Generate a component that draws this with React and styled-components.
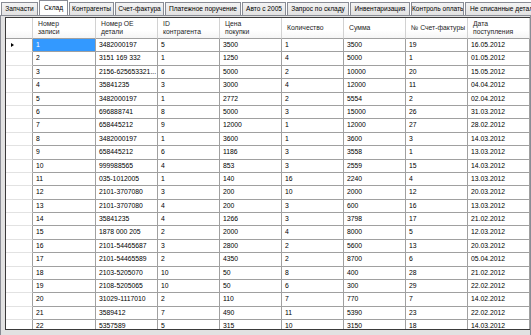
import React from "react";
import styled, { createGlobalStyle } from "styled-components";

const GlobalStyle = createGlobalStyle`
  html, body {
    margin: 0;
    padding: 0;
    background: #ffffff;
    overflow: hidden;
  }
  body {
    font-family: "Liberation Sans", Arial, sans-serif;
  }
`;

const Window = styled.div`
  width: 531px;
  height: 335px;
  display: flex;
  flex-direction: column;
  background: #ffffff;
`;

const TabStrip = styled.div`
  display: flex;
  align-items: flex-end;
  gap: 1px;
  height: 15px;
  padding-left: 1px;
  position: relative;
  z-index: 1;
  overflow: hidden;
`;

const Tab = styled.div`
  flex: none;
  box-sizing: border-box;
  width: ${(p) => p.$w}px;
  height: ${(p) => (p.$active ? 16 : 13)}px;
  margin-bottom: ${(p) => (p.$active ? -1 : 0)}px;
  border: 1px solid #898c95;
  border-bottom: none;
  background: ${(p) =>
    p.$active ? "#ffffff" : "linear-gradient(#f4f4f4, #e2e2e2)"};
  font-size: 6.6px;
  line-height: ${(p) => (p.$active ? 13 : 11)}px;
  text-align: ${(p) => (p.$left ? "left" : "center")};
  padding-left: ${(p) => (p.$left ? 4 : 0)}px;
  white-space: nowrap;
  overflow: hidden;
  color: #000000;
`;

const Page = styled.div`
  flex: 1;
  box-sizing: border-box;
  border: 1px solid #898c95;
  border-bottom: none;
  padding: 1px 0 0 4px;
  background: #e2e2e2;
`;

const Grid = styled.div`
  box-sizing: border-box;
  height: 313px;
  width: 525px;
  overflow: hidden;
  border-left: 1px solid #3a3a3a;
  border-top: 1px solid #3a3a3a;
  border-bottom: 1px solid #3a3a3a;
  background: #ffffff;
  display: grid;
  grid-template-columns: 27px 63px repeat(7, 62px);
  grid-template-rows: 21px;
  grid-auto-rows: 13.4px;
  align-content: start;
  font-size: 6.8px;
  color: #000000;
`;

const HeadCell = styled.div`
  box-sizing: border-box;
  display: flex;
  align-items: center;
  padding-left: 5px;
  border-right: 1px solid #d2d2d2;
  border-bottom: 1px solid #a0a0a0;
  background: linear-gradient(#ffffff 60%, #f5f5f5);
  line-height: 8px;
  white-space: pre-line;
  color: #1e1e1e;
  overflow: hidden;
`;

const RowHead = styled.div`
  box-sizing: border-box;
  display: flex;
  align-items: center;
  padding-left: 5px;
  border-right: 1px solid #a0a0a0;
  border-bottom: 1px solid #e2e2e2;
  background: #ffffff;
`;

const Arrow = styled.span`
  display: block;
  width: 0;
  height: 0;
  border-top: 2.5px solid transparent;
  border-bottom: 2.5px solid transparent;
  border-left: 3px solid #000000;
`;

const Cell = styled.div`
  box-sizing: border-box;
  padding-left: 3px;
  border-right: 1px solid #a0a0a0;
  border-bottom: 1px solid #a0a0a0;
  line-height: 12.4px;
  white-space: nowrap;
  overflow: hidden;
  background: ${(p) => (p.$selected ? "#3399ff" : "#ffffff")};
  color: ${(p) => (p.$selected ? "#ffffff" : "#000000")};
`;

const tabs = [
  { label: "Запчасти", w: 37 },
  { label: "Склад", w: 29, active: true },
  { label: "Контрагенты", w: 45 },
  { label: "Счет-фактура", w: 49 },
  { label: "Платежное поручение", w: 76 },
  { label: "Авто с 2005", w: 44 },
  { label: "Запрос по складу", w: 62 },
  { label: "Инвентаризация", w: 60 },
  { label: "Контроль оплаты", w: 53 },
  { label: "Не списанные детали", w: 90, left: true },
];

const columns = [
  "Номер\nзаписи",
  "Номер OE\nдетали",
  "ID\nконтрагента",
  "Цена\nпокупки",
  "Количество",
  "Сумма",
  "№ Счет-фактуры",
  "Дата\nпоступления",
];

const rows = [
  ["1", "3482000197", "5", "3500", "1", "3500", "19", "16.05.2012"],
  ["2", "3151 169 332", "1", "1250", "4", "5000", "1", "01.05.2012"],
  ["3", "2156-625653321...", "6", "5000", "2", "10000", "20", "15.05.2012"],
  ["4", "35841235", "3", "3000", "4", "12000", "11", "04.04.2012"],
  ["5", "3482000197", "1", "2772", "2", "5554", "2", "02.04.2012"],
  ["6", "696888741", "8", "5000", "3", "15000", "26", "31.03.2012"],
  ["7", "658445212", "9", "12000", "1", "12000", "27", "28.02.2012"],
  ["8", "3482000197", "1", "3600", "1", "3600", "3", "14.03.2012"],
  ["9", "658445212", "6", "1186", "3", "3558", "1", "13.03.2012"],
  ["10", "999988565", "4", "853", "3", "2559", "15", "14.03.2012"],
  ["11", "035-1012005", "1", "140", "16", "2240", "4", "13.03.2012"],
  ["12", "2101-3707080", "3", "200", "10", "2000", "12", "20.03.2012"],
  ["13", "2101-3707080", "4", "200", "3", "600", "16", "13.03.2012"],
  ["14", "35841235", "4", "1266", "3", "3798", "17", "21.02.2012"],
  ["15", "1878 000 205", "2", "2000", "4", "8000", "5", "12.03.2012"],
  ["16", "2101-54465687", "3", "2800", "2", "5600", "13", "20.03.2012"],
  ["17", "2101-54465589", "2", "4350", "2", "8700", "6", "05.04.2012"],
  ["18", "2103-5205070", "10", "50", "8", "400", "28", "21.02.2012"],
  ["19", "2108-5205065", "10", "50", "6", "300", "29", "22.02.2012"],
  ["20", "31029-1117010", "2", "110", "7", "770", "7", "14.02.2012"],
  ["21", "3589412", "7", "490", "11", "5390", "23", "22.02.2012"],
  ["22", "5357589", "5", "315", "10", "3150", "18", "14.03.2012"],
];

export default function App() {
  return (
    <Window>
      <GlobalStyle />
      <TabStrip>
        {tabs.map((t) => (
          <Tab key={t.label} $w={t.w} $active={t.active} $left={t.left}>
            {t.label}
          </Tab>
        ))}
      </TabStrip>
      <Page>
        <Grid>
          <HeadCell />
          {columns.map((c) => (
            <HeadCell key={c}>{c}</HeadCell>
          ))}
          {rows.map((r, i) => (
            <React.Fragment key={r[0]}>
              <RowHead>{i === 0 && <Arrow />}</RowHead>
              {r.map((v, j) => (
                <Cell key={j} $selected={i === 0 && j === 0}>
                  {v}
                </Cell>
              ))}
            </React.Fragment>
          ))}
        </Grid>
      </Page>
    </Window>
  );
}
